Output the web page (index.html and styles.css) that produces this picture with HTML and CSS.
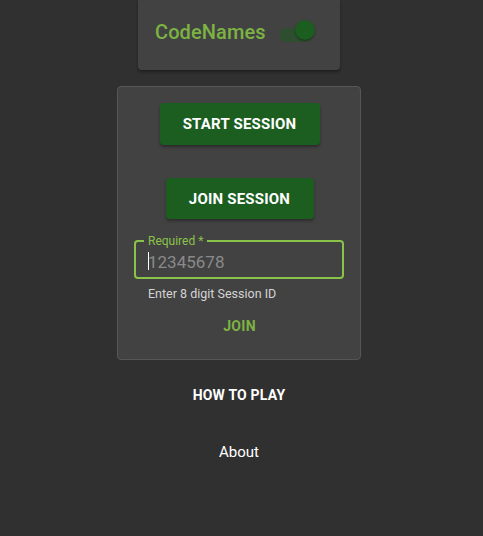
FILE: index.html
```html
<!DOCTYPE html>
<html>
<head>
<meta charset="utf-8">
<link rel="stylesheet" href="styles.css">
</head>
<body>
<div class="page">
  <header class="top-card">
    <h1 class="title">CodeNames</h1>
    <div class="switch">
      <span class="track"></span>
      <span class="thumb"></span>
    </div>
  </header>
  <main class="card">
    <button class="btn btn-start">Start Session</button>
    <button class="btn btn-join">Join Session</button>
    <div class="field">
      <fieldset class="outline"><legend class="legend">Required *</legend></fieldset>
      <span class="caret"></span>
      <span class="placeholder">12345678</span>
    </div>
    <div class="helper">Enter 8 digit Session ID</div>
    <button class="text-btn">Join</button>
  </main>
  <div class="howto">How to play</div>
  <div class="about">About</div>
</div>
</body>
</html>
```
FILE: styles.css
```css
* { box-sizing: border-box; }
html, body { margin: 0; padding: 0; background: #303030; }
body { font-family: Roboto, "Noto Sans", Arial, sans-serif; height: 536px; overflow: hidden; }
.page {
  width: 478px;
  display: flex;
  flex-direction: column;
  align-items: center;
}
.top-card {
  width: 202px;
  height: 70px;
  background: #424242;
  border-radius: 0 0 4px 4px;
  box-shadow: 0 2px 3px rgba(0,0,0,0.35);
  display: flex;
  align-items: center;
  padding: 0 0 0 17px;
  gap: 12px;
}
.title {
  margin: 0;
  font-size: 20px;
  font-weight: 500;
  color: #7cb342;
  letter-spacing: 0.1px;
  position: relative;
  top: -3px;
}
.switch {
  position: relative;
  width: 38px;
  height: 20px;
}
.track {
  position: absolute;
  left: 1px;
  top: 3px;
  width: 34px;
  height: 14px;
  border-radius: 7px;
  background: #2f4e2f;
}
.thumb {
  position: absolute;
  left: 17px;
  top: -5px;
  width: 20px;
  height: 20px;
  border-radius: 50%;
  background: #1b5e20;
  box-shadow: 0 1px 2px rgba(0,0,0,0.4);
}
.card {
  margin-top: 16px;
  width: 244px;
  height: 274px;
  background: #424242;
  border: 1px solid #565656;
  border-radius: 4px;
  display: flex;
  flex-direction: column;
  align-items: center;
  padding: 16px 15px 0 16px;
}
.btn {
  border: none;
  background: #1b5e20;
  color: #fff;
  font-family: inherit;
  font-weight: 700;
  font-size: 15px;
  text-transform: uppercase;
  letter-spacing: 0.2px;
  border-radius: 4px;
  height: 42px;
  box-shadow: 0 2px 3px rgba(0,0,0,0.35);
  padding: 0;
}
.btn-start { width: 160px; }
.btn-join { width: 148px; margin-top: 33px; height: 41px; }
.field {
  position: relative;
  width: 210px;
  height: 44px;
  margin-top: 16px;
  align-self: flex-start;
}
.outline {
  position: absolute;
  left: 0; right: 0; top: 0; bottom: 0;
  margin: 0;
  padding: 0 8px;
  border: 2px solid #8bc34a;
  border-radius: 4px;
}
.legend {
  padding: 0 4px;
  font-size: 12px;
  line-height: 12px;
  color: #8bc34a;
  margin-left: 0;
}
.caret {
  position: absolute;
  left: 14px;
  top: 17px;
  width: 1px;
  height: 18px;
  background: #fff;
}
.placeholder {
  position: absolute;
  left: 14px;
  top: 16px;
  font-size: 17px;
  line-height: 22px;
  color: #8a8a8a;
}
.helper {
  align-self: flex-start;
  margin: 7px 0 0 14px;
  font-size: 12.5px;
  color: #d4d4d4;
  line-height: 16px;
}
.text-btn {
  margin-top: 16px;
  border: none;
  background: none;
  color: #7cb342;
  font-family: inherit;
  font-weight: 700;
  font-size: 14px;
  text-transform: uppercase;
  padding: 0;
  letter-spacing: 0.3px;
}
.howto {
  margin-top: 27px;
  color: #fff;
  font-weight: 700;
  font-size: 14px;
  text-transform: uppercase;
  letter-spacing: 0.2px;
}
.about {
  margin-top: 40px;
  color: #fff;
  font-size: 15px;
}
```
